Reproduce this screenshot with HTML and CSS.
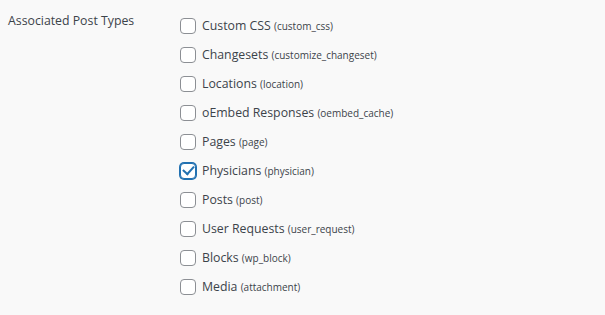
FILE: index.html
```html
<!DOCTYPE html>
<html lang="en">
<head>
<meta charset="UTF-8">
<title>Associated Post Types</title>
<link rel="stylesheet" href="styles.css">
</head>
<body>
<div class="form-row">
<div class="form-label">Associated Post Types</div>
<div class="form-field">
<label class="opt"><input type="checkbox"><span>Custom CSS <small>(custom_css)</small></span></label>
<label class="opt"><input type="checkbox"><span>Changesets <small>(customize_changeset)</small></span></label>
<label class="opt"><input type="checkbox"><span>Locations <small>(location)</small></span></label>
<label class="opt"><input type="checkbox"><span>oEmbed Responses <small>(oembed_cache)</small></span></label>
<label class="opt"><input type="checkbox"><span>Pages <small>(page)</small></span></label>
<label class="opt"><input type="checkbox" checked><span>Physicians <small>(physician)</small></span></label>
<label class="opt"><input type="checkbox"><span>Posts <small>(post)</small></span></label>
<label class="opt"><input type="checkbox"><span>User Requests <small>(user_request)</small></span></label>
<label class="opt"><input type="checkbox"><span>Blocks <small>(wp_block)</small></span></label>
<label class="opt"><input type="checkbox"><span>Media <small>(attachment)</small></span></label>
</div>
</div>
</body>
</html>
```
FILE: styles.css
```css
*{margin:0;padding:0;box-sizing:border-box;}
body{background:#f9f9f9;color:#3c434a;font-family:"Open Sans","Noto Sans",sans-serif;font-size:12.3px;}
.form-row{display:flex;padding-top:10px;}
.form-label{width:180px;padding-left:8px;padding-top:1px;line-height:20px;color:#3c434a;}
.form-field{display:flex;flex-direction:column;padding-top:1px;}
.opt{display:flex;align-items:center;height:29px;cursor:pointer;}
.opt span{padding-left:6px;}
.opt small{font-size:10px;}
.opt input{appearance:none;-webkit-appearance:none;width:16px;height:16px;border:1px solid #8c8f94;border-radius:4px;background:#fff;display:flex;align-items:center;justify-content:center;}
.opt input:checked{border-color:#2271b1;box-shadow:0 0 0 1px #2271b1;}
.opt input:checked::before{content:"";width:9px;height:5px;border-left:2px solid #2271b1;border-bottom:2px solid #2271b1;transform:translateY(-1.5px) rotate(-48deg);}
```
